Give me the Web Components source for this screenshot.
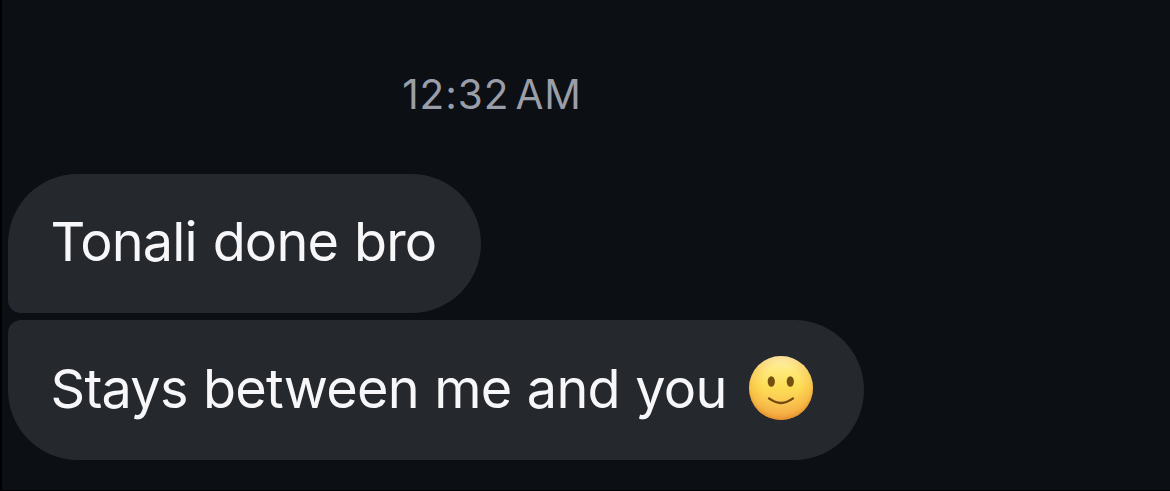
<!DOCTYPE html>
<html lang="en">
<head>
<meta charset="utf-8">
<title>Messages</title>
<style>
	html, body {
		margin: 0;
		height: 100%;
		overflow: hidden;
		background: #000;
	}
</style>
</head>
<body>
<chat-thread>
	<chat-time slot="time">12:32 AM</chat-time>
	<chat-bubble place="first">Tonali done bro</chat-bubble>
	<chat-bubble place="last">Stays between me and you <smile-emoji></smile-emoji></chat-bubble>
</chat-thread>

<script>
(()=> {
	const define = (name, template) => {
		customElements.define(name, class extends HTMLElement {
			constructor() {
				super();
				const shadowRoot = this.attachShadow({ mode: 'open' });
				shadowRoot.innerHTML = template;
			}
		});
	};

	define('chat-thread', `
		<style>
			:host {
				display: block;
				box-sizing: border-box;
				height: 491px;
				border-left: 2px solid #000;
				border-bottom: 1px solid #000;
				background: #0c0f14;
				font-family: Inter, "Liberation Sans", sans-serif;
			}

			.time {
				display: flex;
				box-sizing: border-box;
				justify-content: center;
				width: 980px;
				padding-top: 70px;
				height: 174px;
			}

			.messages {
				display: flex;
				flex-direction: column;
				align-items: flex-start;
				gap: 7px;
				padding-left: 6px;
			}
		</style>
		<div class="time"><slot name="time"></slot></div>
		<div class="messages"><slot></slot></div>
	`);

	define('chat-time', `
		<style>
			:host {
				display: block;
				line-height: 50px;
				font-size: 40.5px;
				letter-spacing: 0.9px;
				word-spacing: -6.2px;
				color: #9a9ea9;
				white-space: nowrap;
			}
		</style>
		<slot></slot>
	`);

	define('chat-bubble', `
		<style>
			:host {
				display: flex;
				align-items: center;
				box-sizing: border-box;
				width: 473px;
				height: 139px;
				padding: 0 0 4px 42.5px;
				border-radius: 70px 70px 70px 13px;
				background: #25282d;
				color: #f7f7f9;
				font-size: 54px;
				line-height: 64px;
				letter-spacing: -0.86px;
				word-spacing: 1.6px;
				white-space: nowrap;
			}

			/* last bubble of a group: tight corner moves to the top */
			:host([place="last"]) {
				width: 856px;
				height: 140px;
				border-radius: 13px 70px 70px 70px;
				letter-spacing: -0.75px;
				word-spacing: 0.9px;
			}

			.text {
				display: block;
			}
		</style>
		<span class="text"><slot></slot></span>
	`);

	define('smile-emoji', `
		<style>
			:host {
				display: inline-block;
				width: 64px;
				height: 64px;
				margin-left: 7.5px;
				vertical-align: -12px;
			}

			svg {
				display: block;
			}
		</style>
		<svg width="64" height="64" viewBox="0 0 64 64" role="img" aria-label="slightly smiling face">
			<defs>
				<linearGradient id="face" x1="0" y1="0" x2="0" y2="1">
					<stop offset="0" stop-color="#fff6bd"/>
					<stop offset=".22" stop-color="#fee97c"/>
					<stop offset=".5" stop-color="#fddc55"/>
					<stop offset="1" stop-color="#f7b350"/>
				</linearGradient>
				<radialGradient id="rim" cx=".5" cy=".44" r=".57">
					<stop offset=".5" stop-color="#f09a30" stop-opacity="0"/>
					<stop offset=".82" stop-color="#ee9428" stop-opacity=".3"/>
					<stop offset="1" stop-color="#dc7c1c" stop-opacity=".75"/>
				</radialGradient>
			</defs>
			<circle cx="32" cy="32" r="32" fill="url(#face)"/>
			<circle cx="32" cy="32" r="32" fill="url(#rim)"/>
			<ellipse cx="22.3" cy="25.5" rx="3.6" ry="5.2" fill="#73500f"/>
			<ellipse cx="41.3" cy="25.5" rx="3.6" ry="5.2" fill="#73500f"/>
			<path d="M20 42.4Q32 51.4 44 42.4" fill="none" stroke="#75490f" stroke-width="2.4" stroke-linecap="round"/>
		</svg>
	`);
})();
</script>
</body>
</html>
